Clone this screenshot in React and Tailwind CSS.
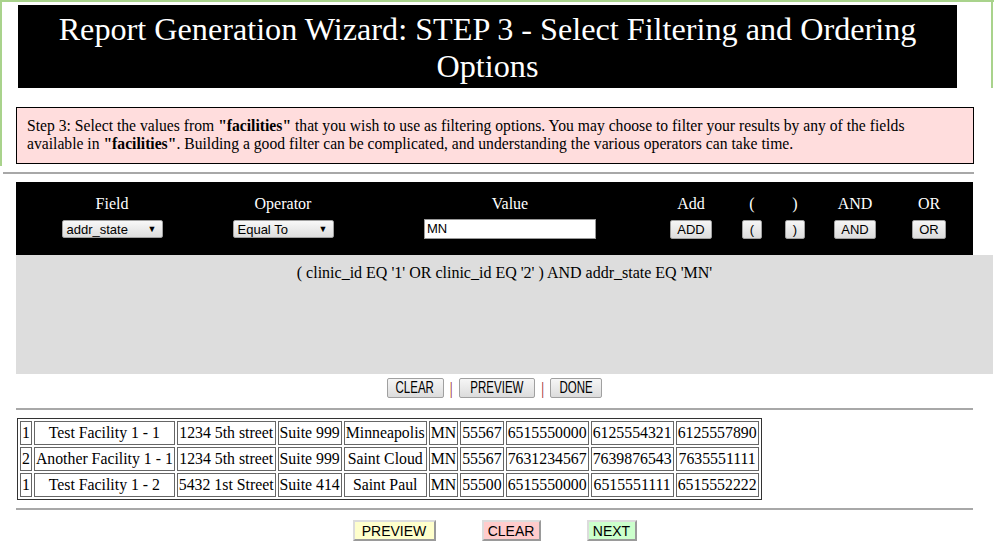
import React from 'react';

const serif = { fontFamily: '"Liberation Serif", "Times New Roman", serif' };

const rows = [
  ['1', 'Test Facility 1 - 1', '1234 5th street', 'Suite 999', 'Minneapolis', 'MN', '55567', '6515550000', '6125554321', '6125557890'],
  ['2', 'Another Facility 1 - 1', '1234 5th street', 'Suite 999', 'Saint Cloud', 'MN', '55567', '7631234567', '7639876543', '7635551111'],
  ['1', 'Test Facility 1 - 2', '5432 1st Street', 'Suite 414', 'Saint Paul', 'MN', '55500', '6515550000', '6515551111', '6515552222'],
];

function FakeSelect({ value }) {
  return (
    <div className="mx-auto flex h-[18px] w-[101px] items-center justify-between rounded-[2px] border border-[#a0a0a0] bg-gradient-to-b from-[#f8f8f8] to-[#dddddd] pl-[4px] pr-[5px] font-['Liberation_Sans',Arial,sans-serif] text-[13px] leading-none text-black">
      <span>{value}</span>
      <span className="text-[9px]">▼</span>
    </div>
  );
}

function GrayBtn({ children, className = '' }) {
  return (
    <button className={`mx-auto flex h-[19px] items-center justify-center rounded-[2px] border border-[#a0a0a0] bg-gradient-to-b from-[#f6f6f6] to-[#dcdcdc] px-[6px] font-['Liberation_Sans',Arial,sans-serif] text-[13px] leading-none text-black ${className}`}>
      {children}
    </button>
  );
}

function MidBtn({ children, w }) {
  return (
    <button className={`flex h-[20px] items-center justify-center rounded-[2px] border border-[#a0a0a0] bg-gradient-to-b from-[#f6f6f6] to-[#dcdcdc] font-['Liberation_Sans',Arial,sans-serif] text-[16px] leading-none text-black ${w}`}>
      <span className="inline-block scale-x-[0.72]">{children}</span>
    </button>
  );
}

export default function App() {
  return (
    <div className="relative h-[553px] w-[995px] overflow-hidden bg-white pt-[5px]" style={serif}>
      {/* green frame lines */}
      <div className="absolute left-0 top-0 h-[2px] w-[994px] bg-[#a9d38c]" />
      <div className="absolute left-0 top-0 h-[166px] w-[2px] bg-[#a9d38c]" />
      <div className="absolute left-[991px] top-0 h-[88px] w-[2px] bg-[#a9d38c]" />

      <div className="ml-[18px] h-[83px] w-[939px] bg-black pt-[6px] text-center text-[32.2px] leading-[37px] text-white">
        Report Generation Wizard: STEP 3 - Select Filtering and Ordering Options
      </div>

      <div className="ml-[16px] mt-[19px] h-[57px] w-[958px] border border-black bg-[#ffdddd] px-[10px] pt-[9px] text-[15.65px] leading-[18px] text-black">
        Step 3: Select the values from <b>"facilities"</b> that you wish to use as filtering options. You may choose to filter your results by any of the fields available in <b>"facilities"</b>. Building a good filter can be complicated, and understanding the various operators can take time.
      </div>

      <div className="ml-[3px] mt-[8px] h-[2px] w-[971px] bg-[#a8a8a8]" />

      <div className="ml-[16px] mt-[8px] h-[73px] w-[957px] bg-black pt-[13px] text-white">
        <div className="grid grid-cols-[192px_150px_304px_58px_64px_22px_98px_50px] text-center text-[16px] leading-[18px]">
          <div>Field</div>
          <div>Operator</div>
          <div>Value</div>
          <div>Add</div>
          <div>(</div>
          <div>)</div>
          <div>AND</div>
          <div>OR</div>
        </div>
        <div className="mt-[6px] grid grid-cols-[192px_150px_304px_58px_64px_22px_98px_50px] items-center">
          <div><FakeSelect value="addr_state" /></div>
          <div><FakeSelect value="Equal To" /></div>
          <div className="pl-[66px]">
            <div className="flex h-[20px] w-[172px] items-center border border-[#999] bg-white pl-[2px] font-['Liberation_Sans',Arial,sans-serif] text-[13px] text-black">MN</div>
          </div>
          <div><GrayBtn>ADD</GrayBtn></div>
          <div><GrayBtn className="w-[20px] px-0">(</GrayBtn></div>
          <div><GrayBtn className="w-[20px] px-0">)</GrayBtn></div>
          <div><GrayBtn>AND</GrayBtn></div>
          <div><GrayBtn>OR</GrayBtn></div>
        </div>
      </div>

      <div className="ml-[16px] h-[119px] w-[977px] bg-[#dddddd] pt-[9px] text-center text-[16px] leading-[18px] text-black">
        ( clinic_id EQ '1' OR clinic_id EQ '2' ) AND addr_state EQ 'MN'
      </div>

      <div className="ml-[16px] mt-[4px] flex w-[957px] items-center justify-center">
        <MidBtn w="w-[57px]">CLEAR</MidBtn>
        <span className="mx-[6px] text-[17px] leading-none text-[#993333]">|</span>
        <MidBtn w="w-[76px]">PREVIEW</MidBtn>
        <span className="mx-[6px] text-[17px] leading-none text-[#993333]">|</span>
        <MidBtn w="w-[52px]">DONE</MidBtn>
      </div>

      <div className="ml-[16px] mt-[10px] h-[2px] w-[957px] bg-[#a8a8a8]" />

      <table className="ml-[17px] mt-[8px] border-separate border-spacing-[2px] border border-[#333] text-center text-[15.8px] leading-[18px] text-black">
        <tbody>
          {rows.map((r, i) => (
            <tr key={i}>
              {r.map((c, j) => (
                <td key={j} className="border border-[#666] px-[1px] py-[2px] whitespace-nowrap">{c}</td>
              ))}
            </tr>
          ))}
        </tbody>
      </table>

      <div className="ml-[16px] mt-[8px] h-[2px] w-[957px] bg-[#a8a8a8]" />

      <div className="ml-[16px] mt-[10px] flex w-[957px] justify-center gap-[46px] font-['Liberation_Sans',Arial,sans-serif] text-[14px] text-black">
        <button className="h-[21px] w-[83px] border-2 border-[#dcdcdc] border-b-[#9a9a9a] border-r-[#9a9a9a] bg-[#ffffcc] leading-none">PREVIEW</button>
        <button className="h-[21px] w-[59px] border-2 border-[#dcdcdc] border-b-[#9a9a9a] border-r-[#9a9a9a] bg-[#ffcccc] leading-none">CLEAR</button>
        <button className="h-[21px] w-[50px] border-2 border-[#dcdcdc] border-b-[#9a9a9a] border-r-[#9a9a9a] bg-[#ccffcc] leading-none">NEXT</button>
      </div>
    </div>
  );
}
